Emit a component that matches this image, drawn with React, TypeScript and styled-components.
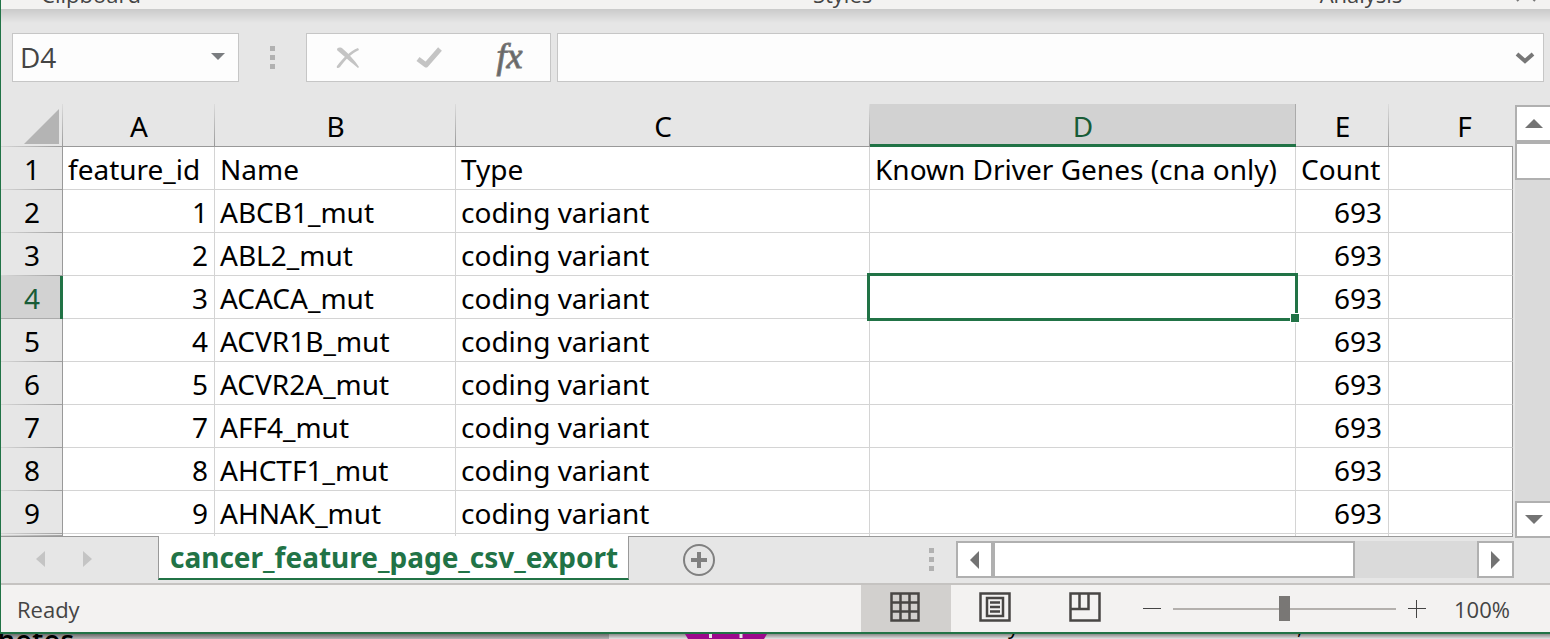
import React, { useState } from "react";
import styled, { createGlobalStyle } from "styled-components";

const green = "#217346";
const cellFont = `"Noto Sans", "Open Sans", sans-serif`;
const uiFont = `"Open Sans", "Noto Sans", sans-serif`;

const GlobalStyle = createGlobalStyle`
  *, *::before, *::after { box-sizing: border-box; }
  body { margin: 0; background: #fff; font-family: ${uiFont}; }
  button, input { font: inherit; color: inherit; margin: 0; padding: 0; border: 0; border-radius: 0; background: none; }
  svg { display: block; }
`;

const Workbook = styled.main`
  border-left: 1px solid ${green};
  border-bottom: 2px solid ${green};
  background: #e6e6e6;
  overflow: hidden;
`;

const RibbonFooter = styled.header`
  height: 9px;
  overflow: hidden;
  background: #f3f2f1;
  color: #444;
  font-size: 22px;
  line-height: 24px;
`;

const GroupLabels = styled.div`
  display: grid;
  grid-template-columns: 180px 586fr 150px 368fr 150px 80px 34px;
  align-items: end;
  margin-top: -18px;
`;

const GroupLabel = styled.span<{ $column: number }>`
  grid-column: ${(p) => p.$column};
  text-align: center;
`;

const CollapseMark = styled.svg`
  grid-column: 7;
  margin-bottom: 4px;
`;

const FormulaBar = styled.div`
  display: flex;
  align-items: center;
  height: 95px;
  padding: 2px 6px 0 11px;
  background: linear-gradient(#cacaca, #e6e6e6 14px);
`;

const Field = styled.div`
  display: flex;
  align-items: center;
  height: 49px;
  border: 1px solid #c6c6c6;
  background: #fdfdfd;
  color: #444;
`;

const NameBox = styled(Field)`
  width: 227px;
  padding: 0 13px 2px 7px;
  font-size: 28px;

  input { flex: 1; min-width: 0; }
`;

const FormulaActions = styled(Field)`
  width: 245px;
  margin-right: 6px;
`;

const FormulaAction = styled.button`
  display: flex;
  flex: 1;
  align-items: center;
  justify-content: center;
  height: 100%;
`;

const FunctionMark = styled.span`
  padding-bottom: 4px;
  color: #666;
  font-family: "Liberation Serif", serif;
  font-size: 36px;
  font-style: italic;
  line-height: 36px;
  -webkit-text-stroke: 1px #777;
`;

const FormulaField = styled(Field)`
  flex: 1;
  padding-right: 8px;

  input { flex: 1; min-width: 0; height: 100%; padding-left: 8px; }
`;

const Grip = styled.span<{ $space: string }>`
  display: grid;
  gap: 4px;
  margin: ${(p) => p.$space};

  i { width: 5px; height: 5px; background: #b1b1b1; }
`;

const Body = styled.div`
  display: flex;
`;

const SheetArea = styled.div`
  flex: 1;
  min-width: 0;
`;

const Grid = styled.table`
  width: calc(100% - 2px);
  table-layout: fixed;
  border-collapse: separate;
  border-spacing: 0;
  font-family: ${cellFont};
  font-size: 28px;
  line-height: 40px;
  color: #000;
`;

const ColumnHead = styled.th<{ $active?: boolean }>`
  height: 43px;
  padding: ${(p) => (p.$active ? 4 : 2)}px 0 0;
  line-height: 36px;
  font-weight: 400;
  border-bottom: ${(p) => (p.$active ? `3px solid ${green}` : "1px solid #999")};
  color: ${(p) => (p.$active ? "#185c37" : "#000")};
  background: ${(p) =>
    p.$active
      ? "linear-gradient(#ababab, #ababab) right / 1px 100% no-repeat, #d2d2d2"
      : "linear-gradient(#dcdcdc, #999) right / 1px 100% no-repeat, #e6e6e6"};

  &:last-child { padding-left: 27px; background: #e6e6e6; }
`;

const Corner = styled.td`
  height: 43px;
  padding: 0 4px 3px 0;
  vertical-align: bottom;
  background:
    linear-gradient(#dcdcdc, #999) right / 1px 100% no-repeat,
    linear-gradient(90deg, #d6d6d6, #999) bottom / 100% 1px no-repeat,
    #e6e6e6;

  svg { margin-left: auto; }
`;

const RowHead = styled.th<{ $active?: boolean }>`
  height: 43px;
  padding: 0 0 0 ${(p) => (p.$active ? 3 : 1)}px;
  font-weight: 400;
  border-right: ${(p) => (p.$active ? `3px solid ${green}` : "1px solid #999")};
  color: ${(p) => (p.$active ? "#185c37" : "#000")};
  background: ${(p) =>
    p.$active
      ? "linear-gradient(#ababab, #ababab) bottom / 100% 1px no-repeat, #d2d2d2"
      : "linear-gradient(90deg, #d6d6d6, #a0a0a0) bottom / 100% 1px no-repeat, #e6e6e6"};
`;

const Cell = styled.td<{ $numeric?: boolean }>`
  position: relative;
  height: 43px;
  padding: 2px 6px 0 5px;
  border-right: 1px solid #d4d4d4;
  border-bottom: 1px solid #d4d4d4;
  background: #fff;
  text-align: ${(p) => (p.$numeric ? "right" : "left")};
  white-space: nowrap;

  &:last-child { border-right-color: #999; }
`;

const CutRow = styled.tr`
  th, td { height: 2px; padding: 0; border-bottom: 0; }
`;

const Selection = styled.span`
  position: absolute;
  z-index: 1;
  inset: -3px;
  border: 3px solid ${green};

  &::after {
    content: "";
    position: absolute;
    right: -5px;
    bottom: -5px;
    width: 10px;
    height: 10px;
    border: 1px solid #fff;
    background: ${green};
  }
`;

const TabBar = styled.div`
  display: flex;
  align-items: flex-start;
  height: 47px;
  padding-right: 1px;
  background: linear-gradient(#999, #999) top left / calc(100% - 2px) 1px no-repeat, #e6e6e6;
`;

const SheetNav = styled.div`
  display: flex;
  gap: 38px;
  width: 157px;
  height: 45px;
  align-items: center;
  padding-left: 35px;
`;

const SheetTab = styled.button`
  height: 44px;
  padding: 0 10px 0 11px;
  border-left: 1px solid #999;
  border-right: 1px solid #999;
  border-bottom: 2px solid ${green};
  background: #fff;
  color: ${green};
  font-family: ${cellFont};
  font-size: 28px;
  font-weight: 700;
  line-height: 40px;
  white-space: nowrap;
`;

const AddSheet = styled.button`
  margin: 8px auto 0 54px;
`;

const HScroll = styled.div`
  display: flex;
  width: 558px;
  height: 37px;
  margin-top: 5px;
  background: #dadada;
`;

const VScroll = styled.div`
  display: flex;
  flex-direction: column;
  width: 35px;
  height: 433px;
  margin-top: 1px;
  background: #dadada;
`;

const ScrollButton = styled.button<{ $vertical?: boolean; $end?: boolean }>`
  display: flex;
  flex: none;
  align-items: center;
  justify-content: center;
  width: 37px;
  height: 37px;
  border: 2px solid #b0b0b0;
  background: #fff;
  margin-left: ${(p) => (p.$end && !p.$vertical ? "auto" : 0)};
  margin-top: ${(p) => (p.$end && p.$vertical ? "auto" : 0)};
`;

const HThumb = styled.div`
  width: 362px;
  border: 2px solid #b0b0b0;
  background: #fff;
`;

const VThumb = styled.div`
  width: 37px;
  height: 38px;
  border: 2px solid #b0b0b0;
  background: #fff;
`;

const StatusBar = styled.footer`
  display: flex;
  align-items: center;
  height: 49px;
  padding: 0 37px 0 16px;
  border-top: 2px solid #c5c3c1;
  background: #f3f2f1;
  color: #444;
  font-size: 22px;
`;

const Status = styled.span`
  margin-right: auto;
`;

const Views = styled.div`
  display: flex;
  margin-right: 12px;
`;

const ViewButton = styled.button<{ $active?: boolean }>`
  display: flex;
  justify-content: center;
  width: 90px;
  height: 47px;
  padding: 7px 2px 0 0;
  background: ${(p) => (p.$active ? "#d2d0ce" : "transparent")};
`;

const ZoomStep = styled.button`
  flex: none;
  width: 18px;
`;

const ZoomRange = styled.input`
  appearance: none;
  width: 223px;
  height: 26px;
  margin: 0 12px;
  background: linear-gradient(#b3b0ad, #b3b0ad) center / 100% 2px no-repeat;

  &::-webkit-slider-thumb {
    appearance: none;
    width: 11px;
    height: 25px;
    background: #797775;
  }
`;

const ZoomLevel = styled.output`
  width: 59px;
  margin-left: 28px;
  white-space: nowrap;
`;

const Behind = styled.div`
  display: flex;
  height: 5px;
  overflow: hidden;
  background: linear-gradient(#8a8a8a, #e4e4e4);
`;

const BehindPanel = styled.div`
  flex: none;
  width: 609px;
  height: 5px;
  background: linear-gradient(#6c6c6c, #b4b4b4);
  color: #000;
  font-size: 28px;
  font-weight: 600;
  line-height: 24px;
  overflow: hidden;

  span { display: block; margin: -6px 0 0 -20px; }
`;

const Badge = styled.svg`
  flex: none;
  margin-left: 76px;
`;

const BehindText = styled.span<{ $indent: number }>`
  margin: -21px 0 0 ${(p) => p.$indent}px;
  font-size: 22px;
  line-height: 24px;
`;

const Triangle = ({ dir, size, color }: { dir: "up" | "down" | "left" | "right"; size: [number, number]; color: string }) => {
  const [w, h] = size;
  const points = {
    up: `0,${h} ${w},${h} ${w / 2},0`,
    down: `0,0 ${w},0 ${w / 2},${h}`,
    left: `${w},0 ${w},${h} 0,${h / 2}`,
    right: `0,0 0,${h} ${w},${h / 2}`,
  }[dir];
  return (
    <svg width={w} height={h} aria-hidden="true">
      <polygon points={points} fill={color} />
    </svg>
  );
};

const columns = ["A", "B", "C", "D", "E", "F"];
const rows: [number, string][] = [
  [1, "ABCB1_mut"],
  [2, "ABL2_mut"],
  [3, "ACACA_mut"],
  [4, "ACVR1B_mut"],
  [5, "ACVR2A_mut"],
  [7, "AFF4_mut"],
  [8, "AHCTF1_mut"],
  [9, "AHNAK_mut"],
];

export default function App() {
  const [zoom, setZoom] = useState(100);
  return (
    <>
      <GlobalStyle />
      <Workbook>
        <RibbonFooter>
          <GroupLabels>
            <GroupLabel $column={1}>Clipboard</GroupLabel>
            <GroupLabel $column={3}>Styles</GroupLabel>
            <GroupLabel $column={5}>Analysis</GroupLabel>
            <CollapseMark width="20" height="12" aria-hidden="true">
              <path d="M1 11L10 2L19 11" fill="none" stroke="#777" strokeWidth="2" />
            </CollapseMark>
          </GroupLabels>
        </RibbonFooter>

        <FormulaBar>
          <NameBox>
            <input aria-label="Name box" defaultValue="D4" />
            <button aria-label="Show names">
              <Triangle dir="down" size={[14, 7]} color="#7a7d80" />
            </button>
          </NameBox>
          <Grip $space="0 31px" aria-hidden="true"><i /><i /><i /></Grip>
          <FormulaActions>
            <FormulaAction aria-label="Cancel">
              <svg width="24" height="22" viewBox="0 0 24 22">
                <path d="M1 3C1 0 5 0 7 2C13 7 19 14 23 20L22 21C17 17 8 9 2 4Z" fill="#c4c4c4" />
                <path d="M22 1L23 3C15 7 9 13 4 20C2 22 0 21 1 19C7 11 14 4 22 1Z" fill="#c4c4c4" />
              </svg>
            </FormulaAction>
            <FormulaAction aria-label="Enter">
              <svg width="26" height="22" viewBox="0 0 26 22">
                <path d="M2 12L10 18L24 2" fill="none" stroke="#c4c4c4" strokeWidth="5" strokeLinejoin="round" />
              </svg>
            </FormulaAction>
            <FormulaAction aria-label="Insert function">
              <FunctionMark>fx</FunctionMark>
            </FormulaAction>
          </FormulaActions>
          <FormulaField>
            <input aria-label="Formula" />
            <button aria-label="Expand formula bar">
              <svg width="20" height="12" viewBox="0 0 20 12">
                <path d="M2 2L10 9L18 2" fill="none" stroke="#777" strokeWidth="4" />
              </svg>
            </button>
          </FormulaField>
        </FormulaBar>

        <Body>
          <SheetArea>
            <Grid>
              <colgroup>
                {[62, 152, 241, 414, 426, 93].map((w, i) => <col key={i} width={w} />)}
                <col />
              </colgroup>
              <thead>
                <tr>
                  <Corner>
                    <svg width="35" height="35" aria-hidden="true"><polygon points="35,0 35,35 0,35" fill="#b4b4b4" /></svg>
                  </Corner>
                  {columns.map((c) => <ColumnHead key={c} scope="col" $active={c === "D"}>{c}</ColumnHead>)}
                </tr>
              </thead>
              <tbody>
                <tr>
                  <RowHead scope="row">1</RowHead>
                  <Cell>feature_id</Cell>
                  <Cell>Name</Cell>
                  <Cell>Type</Cell>
                  <Cell>Known Driver Genes (cna only)</Cell>
                  <Cell>Count</Cell>
                  <Cell />
                </tr>
                {rows.map(([id, name], i) => (
                  <tr key={id}>
                    <RowHead scope="row" $active={i === 2}>{i + 2}</RowHead>
                    <Cell $numeric>{id}</Cell>
                    <Cell>{name}</Cell>
                    <Cell>coding variant</Cell>
                    <Cell>{i === 2 && <Selection />}</Cell>
                    <Cell $numeric>693</Cell>
                    <Cell />
                  </tr>
                ))}
                <CutRow aria-hidden="true">
                  <RowHead />
                  {columns.map((c) => <Cell key={c} />)}
                </CutRow>
              </tbody>
            </Grid>
            <TabBar>
              <SheetNav>
                <button aria-label="Previous sheet"><Triangle dir="left" size={[9, 16]} color="#c4c4c4" /></button>
                <button aria-label="Next sheet"><Triangle dir="right" size={[9, 16]} color="#c4c4c4" /></button>
              </SheetNav>
              <SheetTab>cancer_feature_page_csv_export</SheetTab>
              <AddSheet aria-label="New sheet">
                <svg width="32" height="32" viewBox="0 0 32 32">
                  <circle cx="16" cy="16" r="15" fill="none" stroke="#808080" strokeWidth="2" />
                  <path d="M8 16H24M16 8V24" stroke="#808080" strokeWidth="4" />
                </svg>
              </AddSheet>
              <Grip $space="12px 22px 0 0" aria-hidden="true"><i /><i /><i /></Grip>
              <HScroll>
                <ScrollButton aria-label="Scroll left"><Triangle dir="left" size={[9, 18]} color="#737373" /></ScrollButton>
                <HThumb />
                <ScrollButton $end aria-label="Scroll right"><Triangle dir="right" size={[9, 18]} color="#737373" /></ScrollButton>
              </HScroll>
            </TabBar>
          </SheetArea>
          <VScroll>
            <ScrollButton $vertical aria-label="Scroll up"><Triangle dir="up" size={[18, 9]} color="#737373" /></ScrollButton>
            <VThumb />
            <ScrollButton $vertical $end aria-label="Scroll down"><Triangle dir="down" size={[18, 9]} color="#737373" /></ScrollButton>
          </VScroll>
        </Body>

        <StatusBar>
          <Status>Ready</Status>
          <Views>
            <ViewButton $active aria-label="Normal view">
              <svg width="30" height="30" fill="none" stroke="#484644" strokeWidth="2.5">
                <path d="M1.5 1.5H28.5V28.5H1.5ZM10.5 1V29M19.5 1V29M1 10.5H29M1 19.5H29" />
              </svg>
            </ViewButton>
            <ViewButton aria-label="Page layout view">
              <svg width="32" height="30" fill="none" stroke="#484644" strokeWidth="2.5">
                <path d="M1.5 1.5H30.5V28.5H1.5ZM8 6H24V24H8ZM11 10.5H21M11 15H21M11 19.5H21" />
              </svg>
            </ViewButton>
            <ViewButton aria-label="Page break preview">
              <svg width="32" height="30" fill="none" stroke="#484644" strokeWidth="2.5">
                <path d="M1.5 1.5H30.5V28.5H1.5ZM1 17H19.5V1M10.5 1V17" />
              </svg>
            </ViewButton>
          </Views>
          <ZoomStep aria-label="Zoom out" onClick={() => setZoom(zoom - 10)}>
            <svg width="18" height="18" stroke="#444"><path d="M0 8.5H18" /></svg>
          </ZoomStep>
          <ZoomRange type="range" aria-label="Zoom" min={10} max={190} value={zoom} onChange={(e) => setZoom(+e.target.value)} />
          <ZoomStep aria-label="Zoom in" onClick={() => setZoom(zoom + 10)}>
            <svg width="18" height="18" stroke="#444"><path d="M0 8.5H18M8.5 0V18" /></svg>
          </ZoomStep>
          <ZoomLevel>{zoom}%</ZoomLevel>
        </StatusBar>
      </Workbook>
      <Behind>
        <BehindPanel><span>photos</span></BehindPanel>
        <Badge width="82" height="5" aria-hidden="true">
          <path d="M0 0H82L79 5H3Z" fill="#9b0a8c" />
          <path d="M25.5 0V4M56 0V4" stroke="#e8e8e8" strokeWidth="3" />
        </Badge>
        <BehindText $indent={241}>y</BehindText>
        <BehindText $indent={278}>,</BehindText>
      </Behind>
    </>
  );
}
